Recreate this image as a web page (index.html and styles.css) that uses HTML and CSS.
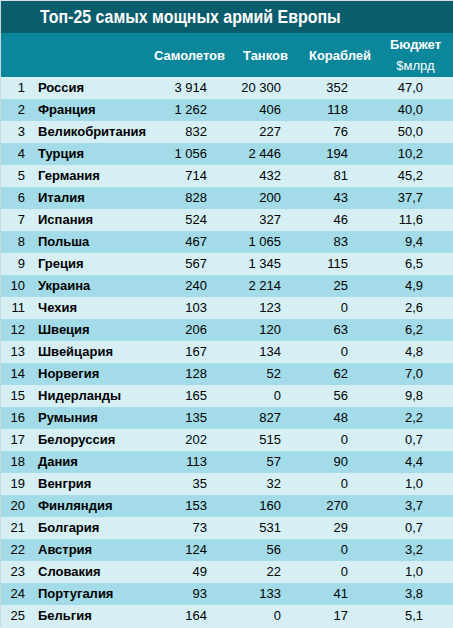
FILE: index.html
```html
<!DOCTYPE html>
<html lang="ru">
<head>
<meta charset="utf-8">
<title>Топ-25 самых мощных армий Европы</title>
<link rel="stylesheet" href="styles.css">
</head>
<body>
<div class="sheet">
  <div class="title"><span class="title-text">Топ-25 самых мощных армий Европы</span></div>
  <table class="grid">
    <colgroup>
      <col class="c-num"><col class="c-name"><col class="c-air"><col class="c-tank"><col class="c-ship"><col class="c-bud">
    </colgroup>
    <thead>
      <tr>
        <th></th><th></th>
        <th class="h-air">Самолетов</th>
        <th class="h-tank">Танков</th>
        <th class="h-ship">Кораблей</th>
        <th class="h-bud"><span class="h-line">Бюджет</span><span class="h-line h-sub">$млрд</span></th>
      </tr>
    </thead>
    <tbody>
      <tr><td class="num">1</td><td class="name">Россия</td><td class="v air">3&nbsp;914</td><td class="v tank">20&nbsp;300</td><td class="v ship">352</td><td class="v bud">47,0</td></tr>
      <tr><td class="num">2</td><td class="name">Франция</td><td class="v air">1&nbsp;262</td><td class="v tank">406</td><td class="v ship">118</td><td class="v bud">40,0</td></tr>
      <tr><td class="num">3</td><td class="name">Великобритания</td><td class="v air">832</td><td class="v tank">227</td><td class="v ship">76</td><td class="v bud">50,0</td></tr>
      <tr><td class="num">4</td><td class="name">Турция</td><td class="v air">1&nbsp;056</td><td class="v tank">2&nbsp;446</td><td class="v ship">194</td><td class="v bud">10,2</td></tr>
      <tr><td class="num">5</td><td class="name">Германия</td><td class="v air">714</td><td class="v tank">432</td><td class="v ship">81</td><td class="v bud">45,2</td></tr>
      <tr><td class="num">6</td><td class="name">Италия</td><td class="v air">828</td><td class="v tank">200</td><td class="v ship">43</td><td class="v bud">37,7</td></tr>
      <tr><td class="num">7</td><td class="name">Испания</td><td class="v air">524</td><td class="v tank">327</td><td class="v ship">46</td><td class="v bud">11,6</td></tr>
      <tr><td class="num">8</td><td class="name">Польша</td><td class="v air">467</td><td class="v tank">1&nbsp;065</td><td class="v ship">83</td><td class="v bud">9,4</td></tr>
      <tr><td class="num">9</td><td class="name">Греция</td><td class="v air">567</td><td class="v tank">1&nbsp;345</td><td class="v ship">115</td><td class="v bud">6,5</td></tr>
      <tr><td class="num">10</td><td class="name">Украина</td><td class="v air">240</td><td class="v tank">2&nbsp;214</td><td class="v ship">25</td><td class="v bud">4,9</td></tr>
      <tr><td class="num">11</td><td class="name">Чехия</td><td class="v air">103</td><td class="v tank">123</td><td class="v ship">0</td><td class="v bud">2,6</td></tr>
      <tr><td class="num">12</td><td class="name">Швеция</td><td class="v air">206</td><td class="v tank">120</td><td class="v ship">63</td><td class="v bud">6,2</td></tr>
      <tr><td class="num">13</td><td class="name">Швейцария</td><td class="v air">167</td><td class="v tank">134</td><td class="v ship">0</td><td class="v bud">4,8</td></tr>
      <tr><td class="num">14</td><td class="name">Норвегия</td><td class="v air">128</td><td class="v tank">52</td><td class="v ship">62</td><td class="v bud">7,0</td></tr>
      <tr><td class="num">15</td><td class="name">Нидерланды</td><td class="v air">165</td><td class="v tank">0</td><td class="v ship">56</td><td class="v bud">9,8</td></tr>
      <tr><td class="num">16</td><td class="name">Румыния</td><td class="v air">135</td><td class="v tank">827</td><td class="v ship">48</td><td class="v bud">2,2</td></tr>
      <tr><td class="num">17</td><td class="name">Белоруссия</td><td class="v air">202</td><td class="v tank">515</td><td class="v ship">0</td><td class="v bud">0,7</td></tr>
      <tr><td class="num">18</td><td class="name">Дания</td><td class="v air">113</td><td class="v tank">57</td><td class="v ship">90</td><td class="v bud">4,4</td></tr>
      <tr><td class="num">19</td><td class="name">Венгрия</td><td class="v air">35</td><td class="v tank">32</td><td class="v ship">0</td><td class="v bud">1,0</td></tr>
      <tr><td class="num">20</td><td class="name">Финляндия</td><td class="v air">153</td><td class="v tank">160</td><td class="v ship">270</td><td class="v bud">3,7</td></tr>
      <tr><td class="num">21</td><td class="name">Болгария</td><td class="v air">73</td><td class="v tank">531</td><td class="v ship">29</td><td class="v bud">0,7</td></tr>
      <tr><td class="num">22</td><td class="name">Австрия</td><td class="v air">124</td><td class="v tank">56</td><td class="v ship">0</td><td class="v bud">3,2</td></tr>
      <tr><td class="num">23</td><td class="name">Словакия</td><td class="v air">49</td><td class="v tank">22</td><td class="v ship">0</td><td class="v bud">1,0</td></tr>
      <tr><td class="num">24</td><td class="name">Португалия</td><td class="v air">93</td><td class="v tank">133</td><td class="v ship">41</td><td class="v bud">3,8</td></tr>
      <tr><td class="num">25</td><td class="name">Бельгия</td><td class="v air">164</td><td class="v tank">0</td><td class="v ship">17</td><td class="v bud">5,1</td></tr>
    </tbody>
  </table>
</div>
</body>
</html>
```

FILE: styles.css
```css
html, body {
  margin: 0;
  padding: 0;
  background: #d5eff5;
}
body {
  font-family: "Liberation Sans", Arial, sans-serif;
  color: #000;
}
.sheet {
  width: 452px;
  border-top: 1px solid #d6e2e5;
  border-left: 1px solid #c9dade;
}
.title {
  height: 32px;
  line-height: 32px;
  background: #0a5d6c;
  color: #fff;
  font-size: 18px;
  font-weight: bold;
  padding-left: 39px;
  box-sizing: border-box;
  white-space: nowrap;
  overflow: hidden;
}
.title-text {
  display: inline-block;
  transform: scaleX(0.885);
  transform-origin: left center;
}
.grid {
  width: 452px;
  border-collapse: collapse;
  border-spacing: 0;
  table-layout: fixed;
  font-size: 13px;
}
.c-num { width: 29px; }
.c-name { width: 120px; }
.c-air { width: 79px; }
.c-tank { width: 73px; }
.c-ship { width: 76px; }
.c-bud { width: 75px; }
.grid th, .grid td {
  padding: 0;
  white-space: nowrap;
}
.grid thead tr {
  height: 44px;
  background: #0a879a;
}
.grid th {
  color: #fff;
  font-weight: bold;
  text-align: center;
  vertical-align: middle;
}
.h-line {
  display: block;
  line-height: 21px;
}
.h-sub {
  font-weight: normal;
}
.grid tbody tr {
  height: 22px;
}
.grid tbody tr:nth-child(odd) { background: #d5eff5; }
.grid tbody tr:nth-child(even) { background: #a3dce8; }
.grid td {
  line-height: 22px;
  vertical-align: middle;
}
.num {
  text-align: right;
  padding-right: 5px !important;
}
.name {
  font-weight: bold;
  padding-left: 8px !important;
}
.v { text-align: right; }
.air { padding-right: 22px !important; }
.tank { padding-right: 21px !important; }
.ship { padding-right: 30px !important; }
.bud { padding-right: 30px !important; }
```
